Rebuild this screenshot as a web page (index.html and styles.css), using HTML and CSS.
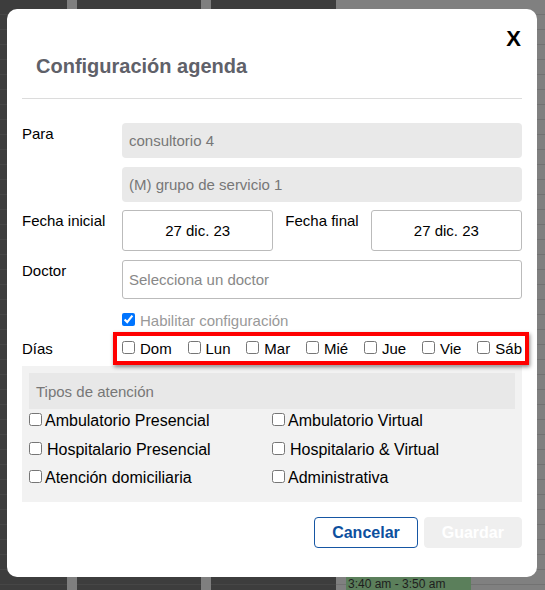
FILE: index.html
```html
<!DOCTYPE html>
<html lang="es">
<head>
  <meta charset="UTF-8" />
  <meta name="viewport" content="width=device-width, initial-scale=1.0"/>
  <title>Configuración agenda</title>
  <link rel="stylesheet" href="styles.css">
</head>
<body>

  <!-- calendario de fondo (oscurecido por el modal) -->
  <div class="calendar">
    <div class="cal-col" style="width: 67px"></div>
    <div class="cal-strip"></div>
    <div class="cal-col" style="width: 124px"></div>
    <div class="cal-strip"></div>
    <div class="cal-col" style="width: 125px"></div>
    <div class="cal-side">
      <div class="cal-event">3:40 am - 3:50 am</div>
    </div>
  </div>

  <div class="modal">
    <span class="close">X</span>

    <div class="modal-header">
      <h2>Configuración agenda</h2>
    </div>

    <div class="modal-body">
      <div class="form-row row-para">
        <label>Para</label>
        <div class="stack">
          <input class="field-static" type="text" value="consultorio 4" disabled>
          <input class="field-static" type="text" value="(M) grupo de servicio 1" disabled>
        </div>
      </div>

      <div class="form-row row-fecha">
        <label>Fecha inicial</label>
        <div class="dates">
          <input class="date-box" type="text" value="27 dic. 23" readonly>
          <label class="inline-label">Fecha final</label>
          <input class="date-box" type="text" value="27 dic. 23" readonly>
        </div>
      </div>

      <div class="form-row row-doctor">
        <label>Doctor</label>
        <input class="doctor-input" type="text" placeholder="Selecciona un doctor">
      </div>

      <div class="form-row row-habilitar">
        <span></span>
        <label class="check-muted"><input type="checkbox" checked>Habilitar configuración</label>
      </div>

      <div class="form-row row-dias">
        <label>Días</label>
        <div class="days">
          <label><input type="checkbox">Dom</label>
          <label><input type="checkbox">Lun</label>
          <label><input type="checkbox">Mar</label>
          <label><input type="checkbox">Mié</label>
          <label><input type="checkbox">Jue</label>
          <label><input type="checkbox">Vie</label>
          <label><input type="checkbox">Sáb</label>
        </div>
      </div>

      <div class="tipos">
        <div class="tipos-title">Tipos de atención</div>
        <div class="tipos-grid">
          <label><input type="checkbox">Ambulatorio Presencial</label>
          <label><input type="checkbox">Ambulatorio Virtual</label>
          <label class="pad"><input type="checkbox">Hospitalario Presencial</label>
          <label class="pad"><input type="checkbox">Hospitalario &amp; Virtual</label>
          <label><input type="checkbox">Atención domiciliaria</label>
          <label><input type="checkbox">Administrativa</label>
        </div>
      </div>
    </div>

    <div class="modal-footer">
      <button class="btn-cancel">Cancelar</button>
      <button class="btn-save" disabled>Guardar</button>
    </div>
  </div>

</body>
</html>
```

FILE: styles.css
```css
* {
  box-sizing: border-box;
  font-family: "Liberation Sans", Arial, sans-serif;
  margin: 0;
  padding: 0;
}

body {
  background-color: #3d3d3d;
  height: 100vh;
  overflow: hidden;
  position: relative;
}

/* fondo */
.calendar {
  display: flex;
  height: 100vh;
}

.cal-col {
  background: repeating-linear-gradient(to bottom, #3d3d3d 0 14px, #464646 14px 15px);
}

.cal-strip {
  width: 10px;
  background-color: #7f7f7f;
}

.cal-side {
  flex: 1;
  position: relative;
  background: repeating-linear-gradient(to bottom, #808080 0 14px, #727272 14px 15px);
}

.cal-event {
  position: absolute;
  top: 577px;
  left: 10px;
  width: 125px;
  height: 20px;
  background-color: #5b7f5b;
  color: #1e1e1e;
  font-size: 12px;
  padding: 0 2px;
}

/* modal */
.modal {
  position: absolute;
  top: 9px;
  left: 7px;
  width: 530px;
  background-color: #fff;
  border-radius: 10px;
  padding: 0 15px 29px;
  color: #000;
}

.close {
  position: absolute;
  top: 19px;
  right: 16px;
  font-size: 22px;
  line-height: 22px;
  font-weight: bold;
  cursor: pointer;
}

.modal-header {
  padding: 45px 14px 20px;
  border-bottom: 1px solid #dcdcdc;
}

.modal-header h2 {
  font-size: 20px;
  line-height: 24px;
  color: #5f6169;
}

.modal-body {
  padding-top: 24px;
  font-size: 15px;
}

.form-row {
  display: grid;
  grid-template-columns: 100px 1fr;
}

.form-row > label {
  line-height: 18px;
  padding-top: 2px;
}

.row-para { margin-bottom: 8px; }
.row-fecha { margin-bottom: 9px; }
.row-doctor { margin-bottom: 11px; }
.row-habilitar { margin-bottom: 10px; }
.row-dias { margin-bottom: 8px; }
.row-dias > label { padding-top: 0; }

.stack {
  display: flex;
  flex-direction: column;
  gap: 9px;
}

.field-static {
  height: 35px;
  border: none;
  border-radius: 4px;
  background-color: #e9e9e9;
  color: #777;
  font-size: 15px;
  padding: 0 7px;
}

.dates {
  display: flex;
  align-items: flex-start;
}

.date-box {
  flex: 1 1 0;
  width: 0;
  min-width: 0;
  height: 41px;
  border: 1px solid #bbb;
  border-radius: 3px;
  text-align: center;
  font-size: 15px;
  color: #000;
  outline: none;
}

.inline-label {
  padding: 2px 12px 0;
  line-height: 18px;
}

.doctor-input {
  height: 39px;
  border: 1px solid #bbb;
  border-radius: 3px;
  padding: 0 6px;
  font-size: 15px;
}

.doctor-input::placeholder {
  color: #888;
}

input[type="checkbox"] {
  width: 13px;
  height: 13px;
  margin: 0 5px 0 0;
  vertical-align: baseline;
}

.check-muted {
  color: #999;
  line-height: 18px;
}

.days {
  position: relative;
  display: flex;
  justify-content: space-between;
  line-height: 18px;
}

/* recuadro rojo resaltado */
.days::after {
  content: "";
  position: absolute;
  top: -8px;
  bottom: -7px;
  left: -9px;
  right: -7px;
  border: 4px solid #f00;
  box-shadow: 1px 2px 4px rgba(0, 0, 0, 0.45);
  pointer-events: none;
}

.tipos {
  background-color: #f2f2f2;
  padding: 7px 7px 15px;
}

.tipos-title {
  height: 36px;
  background-color: #e8e8e8;
  color: #777;
  padding-left: 7px;
  display: flex;
  align-items: center;
}

.tipos-grid {
  display: grid;
  grid-template-columns: 1fr 1fr;
  row-gap: 10.5px;
  margin-top: 3px;
  font-size: 16px;
  line-height: 18px;
}

.tipos-grid input[type="checkbox"] {
  margin-right: 3px;
}

.tipos-grid .pad input[type="checkbox"] {
  margin-right: 5px;
}

.modal-footer {
  display: flex;
  justify-content: flex-end;
  gap: 6px;
  margin-top: 15px;
}

.modal-footer button {
  height: 31px;
  font-size: 16px;
  font-weight: bold;
  border-radius: 4px;
  cursor: pointer;
}

.btn-cancel {
  background-color: #fff;
  border: 1px solid #1656a3;
  color: #0d4f9e;
  padding: 0 17px;
}

.btn-save {
  background-color: #efefef;
  border: 1px solid #efefef;
  color: #fff;
  padding: 0 17px;
}
```
